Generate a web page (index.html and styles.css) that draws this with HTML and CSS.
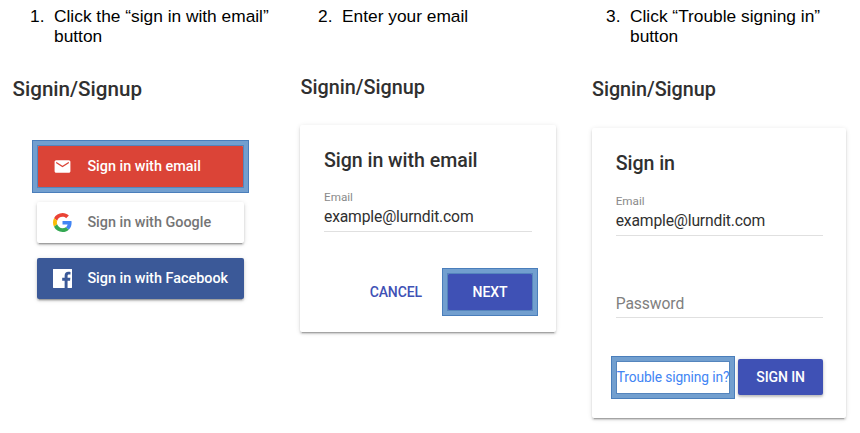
FILE: index.html
```html
<!DOCTYPE html>
<html lang="en">
<head>
<meta charset="utf-8">
<title>Signing in</title>
<link rel="stylesheet" href="styles.css">
</head>
<body>
<main class="steps">
  <section class="step step-choose">
    <p class="instruction"><span class="number">1.</span><span>Click the “sign in with email”<br>button</span></p>
    <h2 class="heading">Signin/Signup</h2>
    <div class="providers">
      <div class="provider email highlight">
        <svg class="icon" viewBox="0 0 24 24"><path fill="#fff" d="M20 4H4c-1.100 0-2 .9-2 2v12c0 1.100.9 2 2 2h16c1.100 0 2-.9 2-2V6c0-1.100-.9-2-2-2zm0 4-8 5-8-5V6l8 5 8-5v2z"/></svg>
        <span>Sign in with email</span>
      </div>
      <div class="provider google">
        <svg class="icon" viewBox="0 0 48 48"><path fill="#EA4335" d="M24 9.500c3.540 0 6.710 1.220 9.210 3.600l6.850-6.850C35.900 2.380 30.470 0 24 0 14.620 0 6.510 5.380 2.560 13.220l7.980 6.190C12.430 13.720 17.740 9.500 24 9.500z"/><path fill="#4285F4" d="M46.980 24.550c0-1.570-.15-3.090-.38-4.550H24v9.020h12.940c-.58 2.960-2.260 5.480-4.780 7.180l7.730 6c4.510-4.180 7.090-10.360 7.090-17.650z"/><path fill="#FBBC05" d="M10.530 28.590c-.48-1.450-.76-2.990-.76-4.590s.27-3.140.76-4.590l-7.980-6.190C.92 16.460 0 20.120 0 24s.92 7.540 2.560 10.780l7.970-6.190z"/><path fill="#34A853" d="M24 48c6.480 0 11.930-2.130 15.890-5.810l-7.730-6c-2.150 1.450-4.920 2.300-8.160 2.300-6.260 0-11.570-4.220-13.470-9.910l-7.980 6.190C6.510 42.620 14.620 48 24 48z"/></svg>
        <span>Sign in with Google</span>
      </div>
      <div class="provider facebook">
        <svg class="icon" viewBox="0 0 24 24"><path fill="#fff" d="M.6 0h22.800c.4 0 .6.2.6.6v22.800c0 .4-.2.6-.6.6h-5v-9.300h3.100l.5-3.600h-3.600V8.800c0-1.100.3-1.800 1.800-1.800h1.900V3.800c-.3 0-1.500-.2-2.800-.2-2.800 0-4.600 1.700-4.600 4.800v2.700h-3.100v3.600h3.100V24H.6c-.4 0-.6-.2-.6-.6V.6C0 .2.2 0 .6 0z"/></svg>
        <span>Sign in with Facebook</span>
      </div>
    </div>
  </section>

  <section class="step step-email">
    <p class="instruction"><span class="number">2.</span><span>Enter your email</span></p>
    <h2 class="heading">Signin/Signup</h2>
    <div class="card">
      <h3 class="title">Sign in with email</h3>
      <div class="label">Email</div>
      <div class="value">example@lurndit.com</div>
      <div class="actions">
        <span class="cancel">CANCEL</span>
        <span class="button next highlight">NEXT</span>
      </div>
    </div>
  </section>

  <section class="step step-password">
    <p class="instruction"><span class="number">3.</span><span>Click “Trouble signing in”<br>button</span></p>
    <h2 class="heading">Signin/Signup</h2>
    <div class="card">
      <h3 class="title">Sign in</h3>
      <div class="label">Email</div>
      <div class="value">example@lurndit.com</div>
      <div class="value password">Password</div>
      <div class="actions">
        <span class="trouble highlight">Trouble signing in?</span>
        <span class="button">SIGN IN</span>
      </div>
    </div>
  </section>
</main>
</body>
</html>
```
FILE: styles.css
```css
* { box-sizing: border-box; }
body {
  margin: 0;
  background: #fff;
  font-family: Roboto, sans-serif;
  color: #303030;
}
.steps {
  display: grid;
  grid-template-columns: 288px 288px 284px;
  height: 433px;
  overflow: hidden;
}
.instruction {
  display: flex;
  height: 47px;
  margin: 6px 0 0 30px;
  font: 17.33px/20px "Liberation Sans", sans-serif;
  color: #000;
  white-space: nowrap;
}
.number { width: 24px; flex: none; }
.heading {
  margin: 23px 0 0 12.5px;
  font-size: 20.6px;
  line-height: 27px;
  font-weight: 500;
}
.providers {
  display: flex;
  flex-direction: column;
  gap: 15px;
  width: 207px;
  margin: 42.500px 0 0 37px;
}
.provider {
  display: flex;
  align-items: center;
  gap: 15px;
  height: 41px;
  padding-left: 16.400px;
  border-radius: 2px;
  font-size: 14.4px;
  font-weight: 500;
  color: #fff;
  white-space: nowrap;
  box-shadow: 0 2px 2px rgba(0,0,0,.16), 0 3px 1px -2px rgba(0,0,0,.2), 0 1px 5px rgba(0,0,0,.14);
}
.icon { width: 19px; height: 19px; flex: none; }
.email { background: #db4437; }
.google { background: #fff; color: #757575; }
.facebook { background: #3b5998; }
.highlight { position: relative; }
.highlight::after {
  content: "";
  position: absolute;
  inset: -6px -5px;
  border: 5px solid #729fcf;
  outline: 1px solid #4a7ebb;
  outline-offset: -1px;
  box-shadow: inset 0 0 0 1px #5585bd;
}
.step-email .heading,
.step-password .heading {
  font-size: 19.800px;
  line-height: 26px;
}
.step-email .heading { margin-top: 22px; }
.step-password .heading { margin: 24px 0 0 16px; letter-spacing: -.05px; }
.card {
  height: 207px;
  width: 256px;
  margin: 24px 0 0 12px;
  padding: 23px 24px 0;
  border-radius: 2px;
  background: #fff;
  box-shadow: 0 2px 2px rgba(0,0,0,.14), 0 3px 1px -2px rgba(0,0,0,.2), 0 1px 5px rgba(0,0,0,.12);
}
.step-password .card {
  width: 254px;
  height: 290px;
  margin: 25px 0 0 16px;
  padding: 23px 23px 0 23.700px;
}
.title { margin: 0; font-size: 19.600px; line-height: 26px; font-weight: 500; letter-spacing: -.05px; }
.label { margin-top: 15px; font-size: 11.700px; line-height: 16px; color: #8a8a8a; }
.step-password .label { margin-top: 16px; }
.value {
  height: 27px;
  border-bottom: 1px solid #e0e0e0;
  font-size: 15.700px;
  line-height: 24px;
  letter-spacing: -.17px;
}
.password { margin-top: 55px; color: #808080; line-height: 26px; letter-spacing: -.1px; }
.actions {
  display: flex;
  align-items: center;
  justify-content: flex-end;
  height: 38px;
  margin-top: 41px;
  font-size: 14px;
  font-weight: 500;
  white-space: nowrap;
}
.step-email .actions { margin-right: -1px; }
.cancel { margin-right: 25px; color: #3f51b5; letter-spacing: -.1px; }
.button {
  width: 86px;
  height: 36px;
  line-height: 36px;
  text-align: center;
  border-radius: 2px;
  background: #3f51b5;
  color: #fff;
  letter-spacing: -.1px;
  box-shadow: 0 2px 2px rgba(0,0,0,.14), 0 1px 4px rgba(0,0,0,.2);
}
.trouble {
  height: 33px;
  line-height: 33px;
  width: 115px;
  text-align: center;
  font-size: 13.800px;
  font-weight: 400;
  letter-spacing: -.13px;
  color: #4285f4;
}
.trouble.highlight::after { inset: -5px; }
.step-password .actions { margin-top: 40px; }
.step-password .trouble { margin-right: 8px; }
.step-password .button { width: 85px; }
```
